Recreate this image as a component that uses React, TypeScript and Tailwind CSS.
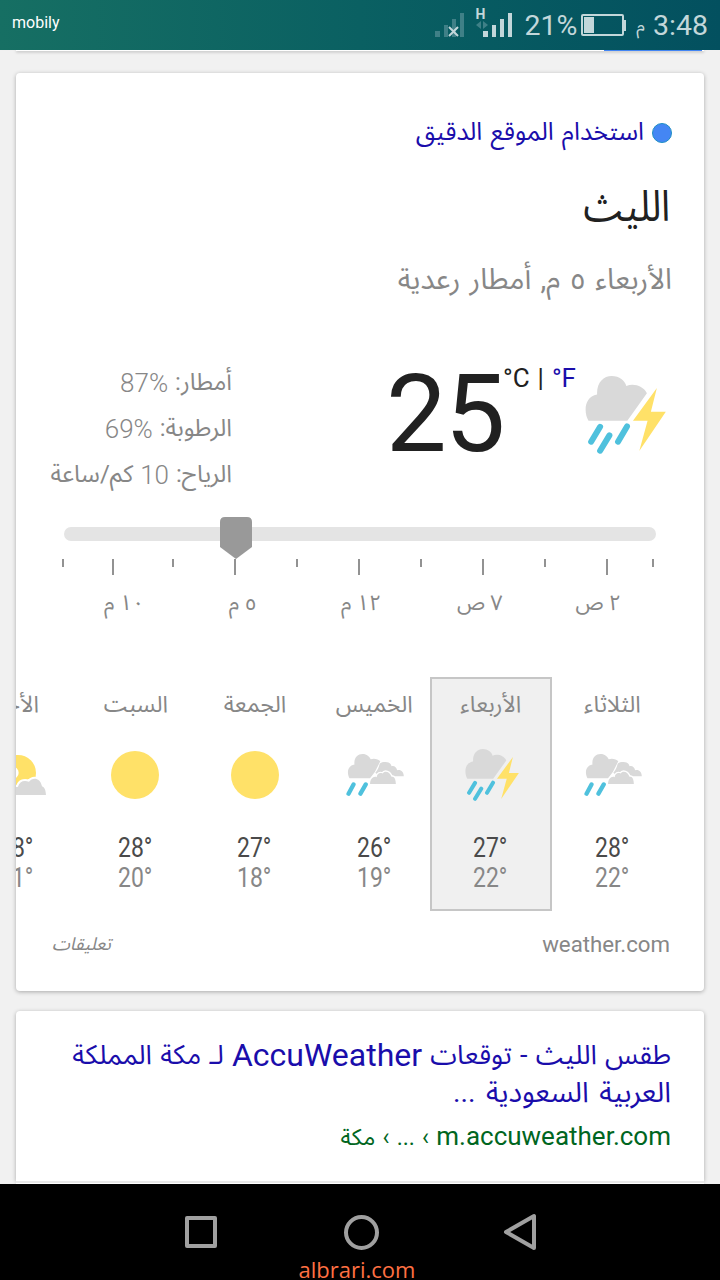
import type { ReactNode } from 'react'

type IconKind = 'storm' | 'rain' | 'sun' | 'partly'

interface Day {
  name: string
  icon: IconKind
  high: string
  low: string
  active?: boolean
}

const days: Day[] = [
  { name: 'الثلاثاء', icon: 'rain', high: '28°', low: '22°' },
  { name: 'الأربعاء', icon: 'storm', high: '27°', low: '22°', active: true },
  { name: 'الخميس', icon: 'rain', high: '26°', low: '19°' },
  { name: 'الجمعة', icon: 'sun', high: '27°', low: '18°' },
  { name: 'السبت', icon: 'sun', high: '28°', low: '20°' },
  { name: 'الأحد', icon: 'partly', high: '28°', low: '21°' },
]

const hours = ['١٠ م', '٥ م', '١٢ م', '٧ ص', '٢ ص']

// gap before each tick, alternating short and long
const ticks = [
  { gap: 'w-0', long: false },
  { gap: 'w-12', long: true },
  { gap: 'w-[58px]', long: false },
  { gap: 'w-[60px]', long: true },
  { gap: 'w-[60px]', long: false },
  { gap: 'w-[60px]', long: true },
  { gap: 'w-[60px]', long: false },
  { gap: 'w-[60px]', long: true },
  { gap: 'w-[60px]', long: false },
  { gap: 'w-[60px]', long: true },
  { gap: 'w-11', long: false },
]

function StormIcon({ className }: { className: string }) {
  return (
    <svg viewBox="5 8 243 235" className={className}>
      <path fill="#d9d9d9" d="M15 143C0 118 2 70 41 64C39 28 60 8 85 8C108 8 125 22 129 38C152 29 180 38 191 60L132 143Z" />
      <path fill="#ffe168" d="M221 44L203 116H248L168 234L193 143H149Z" />
      <path stroke="#4fc1dd" strokeWidth="18" strokeLinecap="round" d="M50 161L23 206M78 187L50 233M131 160L104 206" />
    </svg>
  )
}

function RainIcon() {
  return (
    <svg viewBox="0 4 174 127" className="ml-0.5 h-[42px] w-[58px]">
      <path fill="#d9d9d9" d="M10 77C2 65 2 40 25 36C22 15 35 4 49 4C63 4 70 12 74 20C85 16 97 20 103 26L87 58L72 77Z" />
      <path fill="#d9d9d9" d="M88 61C94 53 98 46 101 34C105 29 111 28 119 28C130 28 136 35 137 41C145 38 152 45 154 53C165 50 174 58 174 71H100Z" />
      <path fill="#d9d9d9" stroke="#fff" strokeWidth="8" paintOrder="stroke" d="M72 95C72 80 82 70 92 74C94 62 102 60 110 63C116 53 132 57 137 73C145 70 150 80 150 95Z" />
      <path stroke="#4fc1dd" strokeWidth="13" strokeLinecap="round" d="M22 96L7 124M59 96L43 124" />
    </svg>
  )
}

function PartlyIcon() {
  return (
    <svg viewBox="-42 255 180 120" className="mr-0.5 h-10 w-[60px]">
      <circle cx="54" cy="309" r="54" fill="#ffe168" />
      <circle cx="38" cy="308" r="18" fill="#fff" />
      <path fill="#d9d9d9" stroke="#fff" strokeWidth="12" paintOrder="stroke" d="M-30 375C-20 350 30 355 54 350C58 335 70 330 87 335C98 322 120 322 126 349C134 353 138 360 138 381H-30Z" />
    </svg>
  )
}

function DayIcon({ kind }: { kind: IconKind }) {
  if (kind === 'storm') return <StormIcon className="ml-[3px] h-[52px] w-[54px]" />
  if (kind === 'rain') return <RainIcon />
  if (kind === 'partly') return <PartlyIcon />
  return <div className="mr-px size-12 rounded-full bg-[#ffe168]" />
}

function StatusBar() {
  return (
    <header className="flex h-[50px] shrink-0 items-center bg-linear-to-r from-[#166f63] via-[#0a6062] to-[#03505f] pr-3 pl-3 text-[#c3d7da]">
      <span className="-mt-1 text-base leading-5 text-white">mobily</span>
      <div className="ml-auto flex items-center">
        <svg viewBox="0 0 80 34" className="-mt-[6px] mr-[9px] h-[34px] w-20">
          <path fill="#3f8087" d="M0 26h5v6h-5zM9 20h4v12h-4zM17 14h4v18h-4zM25 8h4v24h-4z" />
          <path stroke="#c3d7da" strokeWidth="2" d="M14 22l9 9M23 22l-9 9" />
          <path fill="#3f8087" d="M46 16v8l-5-4zM48 16v8l5-4z" />
          <path fill="#c3d7da" d="M48 26h5v6h-5zM57 20h4v12h-4zM65 14h4v18h-4zM73 8h4v24h-4z" />
          <text x="40.500" y="14" fontSize="14" fontWeight="700" fill="#c3d7da">H</text>
        </svg>
        <span className="mt-0.5 text-[28.500px] leading-[34px]">21%</span>
        <div className="ml-1 flex items-center">
          <div className="h-[22px] w-[43px] rounded-xs border-2 border-[#c3d7da] p-px">
            <div className="h-full w-[10px] bg-[#c3d7da]" />
          </div>
          <div className="h-[11px] w-0.5 bg-[#c3d7da]" />
        </div>
        <span className="-mt-px ml-[10px] text-lg leading-[34px]">م</span>
        <span className="mt-0.5 ml-2 text-[28.500px] leading-[34px]">3:48</span>
      </div>
    </header>
  )
}

function Stat({ label, value, children }: { label: string; value: string; children?: ReactNode }) {
  return (
    <div dir="rtl" className="h-[46px] text-2xl leading-[46px] whitespace-nowrap [word-spacing:1px]">
      {label}:{' '}
      <span dir="ltr" className="relative top-0.5 inline-block text-[26px] leading-[44px] font-light">
        {value}
      </span>
      {children}
    </div>
  )
}

function WeatherCard() {
  return (
    <section className="mt-[22px] h-[918px] shrink-0 overflow-hidden rounded bg-white shadow-[0_1px_4px_rgba(0,0,0,0.3)]">
      <div dir="rtl" className="px-8 pt-10">
        <a className="flex h-10 items-center gap-2 text-[#1a0dab]">
          <span className="size-5 rounded-full border-[1.500px] border-[#1f8fc4] bg-[#4486f4]" />
          <span className="-mt-[3px] text-[25px] leading-[38px] [word-spacing:2px]">استخدام الموقع الدقيق</span>
        </a>
        <h1 className="mt-[21px] h-16 origin-right scale-x-89 pr-0.5 text-[43px] leading-[64px] text-[#212121]">الليث</h1>
        <p className="mt-[17px] h-12 text-[29px] leading-[48px] text-[#878787] [word-spacing:2px]">الأربعاء ٥ م, أمطار رعدية</p>
      </div>

      <div className="mt-14 flex h-[138px]">
        <div className="flex w-[216px] flex-col items-end text-[#878787]">
          <Stat label="أمطار" value="87%" />
          <Stat label="الرطوبة" value="69%" />
          <Stat label="الرياح" value="10"> كم/ساعة</Stat>
        </div>
        <div className="ml-[154px] w-[117px] text-[108px] leading-[110px] tracking-[-2px] text-[#212121]">25</div>
        <div className="text-[26px] leading-[38px] whitespace-nowrap text-[#212121] [word-spacing:1.5px]">
          °C | <span className="text-[#1a0dab]">°F</span>
        </div>
        <StormIcon className="mt-[17px] mr-[38px] ml-auto h-[78px] w-[81px]" />
      </div>

      <div className="mt-5 ml-12 flex h-[42px] w-[592px] items-start">
        <div className="relative mt-[10px] h-[14px] w-full rounded-full bg-[#e4e4e4]">
          <svg viewBox="0 0 32 42" className="absolute -top-[10px] left-[156px] h-[42px] w-8">
            <path fill="#999" d="M5 0H27Q32 0 32 5V30L16 42L0 30V5Q0 0 5 0Z" />
          </svg>
        </div>
      </div>
      <div className="ml-[46px] flex h-4 items-start">
        {ticks.map((tick, i) => (
          <div key={i} className="flex">
            <div className={tick.gap} />
            <div className={tick.long ? 'h-4 w-0.5 bg-[#929292]' : 'h-2 w-0.5 bg-[#929292]'} />
          </div>
        ))}
      </div>
      <div className="mt-2 ml-[49px] flex h-10 text-[21.500px] leading-10 text-[#878787]">
        {hours.map((hour) => (
          <div key={hour} dir="rtl" className="w-[118.500px] text-center">{hour}</div>
        ))}
      </div>

      <div dir="rtl" className="mt-[54px] flex h-[234px] pr-8">
        {days.map((day) => (
          <div
            key={day.name}
            className={
              day.active
                ? 'mr-px -ml-1 flex w-[122px] shrink-0 flex-col items-center border-2 border-[#c6c6c6] bg-[#f0f0f0]'
                : 'flex w-[119.200px] shrink-0 flex-col items-center border-y-2 border-transparent'
            }
          >
            <div className="h-12 pt-0.5 text-[23px] leading-[48px] text-[#878787]">{day.name}</div>
            <div className="flex h-24 items-center justify-center">
              <DayIcon kind={day.icon} />
            </div>
            <div dir="ltr" className="mt-[10px] mr-px origin-center scale-x-85 text-[27px] leading-[30px] text-[#878787]">
              <div className="text-[#4a4a4a]">{day.high}</div>
              <div>{day.low}</div>
            </div>
          </div>
        ))}
      </div>

      <div className="mt-[15px] flex h-9 items-center justify-between pr-[34px] pl-9 text-[#878787]">
        <span className="text-lg italic">تعليقات</span>
        <span className="mt-0.5 text-[22.250px]">weather.com</span>
      </div>
    </section>
  )
}

function ResultCard() {
  return (
    <section className="mt-5 h-[170px] shrink-0 rounded-t bg-white pt-[22px] shadow-[0_1px_4px_rgba(0,0,0,0.3)]">
      <div dir="rtl" className="pr-[33px] text-[#1a0dab]">
        <h2 className="leading-10 whitespace-nowrap">
          <span className="block h-10 text-[27px] [word-spacing:1.5px]">
            طقس الليث - توقعات <span className="relative top-0.5 text-[32px]">AccuWeather</span> لـ مكة المملكة
          </span>
          <span className="block h-10 text-[28.500px] [word-spacing:3.5px]">العربية السعودية ...</span>
        </h2>
        <p className="mt-[3px] text-[23px] leading-10 text-[#006621] [word-spacing:1.5px]">
          <span className="text-[26px]">m.accuweather.com</span> › ... › مكة
        </p>
      </div>
    </section>
  )
}

function NavBar() {
  return (
    <footer className="flex h-24 shrink-0 flex-col items-center overflow-hidden bg-black">
      <div className="mt-[29px] flex h-10 w-full items-center">
        <div className="ml-[185px] size-8 rounded-xs border-4 border-[#a0a0a0]" />
        <div className="ml-[127px] size-[35px] rounded-full border-4 border-[#a0a0a0]" />
        <svg viewBox="0 0 34 38" className="ml-[124px] h-[38px] w-[34px]">
          <path fill="none" stroke="#a0a0a0" strokeWidth="4" strokeLinejoin="round" d="M3 19L31 3V35Z" />
        </svg>
      </div>
      <div className="mt-1 ml-[-6px] font-['Open_Sans','Noto_Sans',sans-serif] text-[22px] leading-7 text-[#ff7043]">albrari.com</div>
    </footer>
  )
}

export default function App() {
  return (
    <div className="flex h-[1280px] w-[720px] flex-col overflow-hidden bg-[#f1f1f1] font-[Roboto,'Noto_Sans_Arabic','DejaVu_Sans',sans-serif]">
      <StatusBar />
      <main className="flex h-[1134px] flex-col overflow-hidden px-4">
        <div className="flex h-px shrink-0 justify-end bg-white pr-0.5 shadow-[0_1px_3px_rgba(0,0,0,0.4)]">
          <div className="h-px w-[98px] bg-[#4285f4]" />
        </div>
        <WeatherCard />
        <ResultCard />
        <div className="relative h-[3px] shrink-0 border-t-2 border-[#e8e8e8] bg-white" />
      </main>
      <NavBar />
    </div>
  )
}
